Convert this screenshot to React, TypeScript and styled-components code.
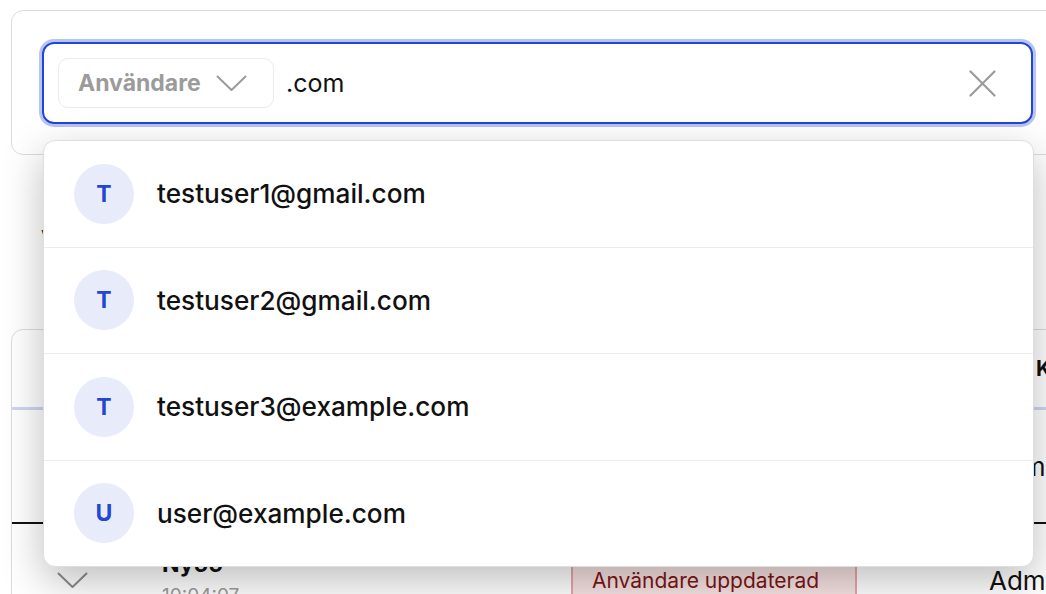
import React from 'react';
import styled, { createGlobalStyle } from 'styled-components';

const blue = '#1f45d9';
const ringBlue = '#b8c4f2';
const border = '#dcdcdc';
const softLine = '#ececec';
const mutedGray = '#9b9b9b';

const GlobalStyle = createGlobalStyle`
  html, body {
    margin: 0;
    padding: 0;
    background: #fff;
    overflow: hidden;
  }
  body {
    font-family: Inter, "Noto Sans", sans-serif;
    color: #111;
    -webkit-font-smoothing: antialiased;
  }
`;

const Page = styled.div`
  width: 1064px;
  padding: 10px 0 0 11px;
  box-sizing: border-box;
`;

const SearchCard = styled.div`
  border: 1px solid ${border};
  border-radius: 12px;
  padding: 31px 30px 30px 30px;
`;

const SearchWrap = styled.div`
  position: relative;
`;

const SearchBox = styled.div`
  height: 82px;
  box-sizing: border-box;
  border: 2px solid ${blue};
  border-radius: 12px;
  box-shadow: 0 0 0 3px ${ringBlue};
  display: flex;
  align-items: center;
  padding: 0 35px 0 14px;
  gap: 12px;
`;

const ScopeSelect = styled.div`
  width: 216px;
  height: 50px;
  box-sizing: border-box;
  border: 1px solid #ebebeb;
  border-radius: 10px;
  display: flex;
  align-items: center;
  justify-content: space-between;
  padding: 0 26px 0 19px;
  color: ${mutedGray};
  font-size: 23px;
  font-weight: 700;
`;

const QueryText = styled.div`
  flex: 1;
  font-size: 25px;
  color: #111;
`;

const ClearButton = styled.div`
  display: flex;
  align-items: center;
  color: ${mutedGray};
`;

const Dropdown = styled.div`
  position: absolute;
  top: calc(100% + 16px);
  left: 1px;
  width: 989px;
  background: #fff;
  border: 1px solid #dedede;
  border-radius: 12px;
  box-shadow: 0 14px 42px rgba(0, 0, 0, 0.26);
  z-index: 10;
  overflow: hidden;
`;

const Option = styled.div`
  height: 105.5px;
  display: flex;
  align-items: center;
  gap: 23px;
  padding-left: 30px;
  &:not(:last-child) {
    border-bottom: 1px solid ${softLine};
  }
`;

const Avatar = styled.div`
  width: 60px;
  height: 60px;
  border-radius: 50%;
  background: #e8ecfa;
  color: #2446d4;
  display: flex;
  align-items: center;
  justify-content: center;
  font-size: 23px;
  font-weight: 700;
`;

const Email = styled.div`
  font-size: 26.2px;
  font-weight: 500;
  color: #111;
`;

const Summary = styled.div`
  margin: 68px 0 0 30px;
  font-size: 16px;
  color: #333;
`;

const TableCard = styled.div`
  margin-top: 86px;
  border: 1px solid ${border};
  border-radius: 12px;
  height: 320px;
`;

const columns = '150px 409px 418px 1fr';

const HeaderRow = styled.div`
  display: grid;
  grid-template-columns: ${columns};
  align-items: center;
  height: 77px;
  border-bottom: 3px solid #cdd5f5;
  font-size: 21px;
  font-weight: 700;
`;

const HeaderCell = styled.div<{ $inset?: number }>`
  padding-left: ${p => p.$inset || 0}px;
  white-space: nowrap;
`;

const Row = styled.div<{ $marked?: boolean }>`
  display: grid;
  grid-template-columns: ${columns};
  align-items: center;
  height: 114px;
  box-sizing: border-box;
  border-bottom: ${p => (p.$marked ? '2px solid #111' : `1px solid ${softLine}`)};
`;

const ExpandCell = styled.div`
  padding-left: 45px;
  display: flex;
  align-items: center;
  color: #8d8d8d;
`;

const NameCell = styled.div`
  display: flex;
  flex-direction: column;
  gap: 6px;
  padding-bottom: 4px;
`;

const Name = styled.div`
  font-size: 23px;
  font-weight: 700;
`;

const Time = styled.div`
  font-size: 19px;
  color: ${mutedGray};
`;

const Badge = styled.div`
  justify-self: start;
  width: 286px;
  box-sizing: border-box;
  padding: 6px 0 6px 19px;
  background: #f7e2e2;
  border: 2px solid #e8a6a6;
  color: #7c1616;
  font-size: 21px;
  white-space: nowrap;
`;

const UserCell = styled.div`
  font-size: 26px;
  white-space: nowrap;
`;

const Chevron = ({ color = 'currentColor' }: { color?: string }) => (
  <svg width="31" height="17" viewBox="0 0 31 17" fill="none">
    <path d="M1.5 1.5 L15.5 15 L29.5 1.5" stroke={color} strokeWidth="2" strokeLinecap="round" strokeLinejoin="round" />
  </svg>
);

const CloseIcon = () => (
  <svg width="27" height="27" viewBox="0 0 27 27" fill="none">
    <path d="M1.5 1.5 L25.5 25.5 M25.5 1.5 L1.5 25.5" stroke="currentColor" strokeWidth="2.2" strokeLinecap="round" />
  </svg>
);

const suggestions = [
  'testuser1@gmail.com',
  'testuser2@gmail.com',
  'testuser3@example.com',
  'user@example.com'
];

const events = [
  { name: 'Ny54', time: '10:02:51', event: 'Användare skapad', user: 'Admin', marked: true },
  { name: 'Ny55', time: '10:04:07', event: 'Användare uppdaterad', user: 'Admin', marked: false }
];

const App = () => (
  <Page>
    <GlobalStyle />
    <SearchCard>
      <SearchWrap>
        <SearchBox>
          <ScopeSelect>
            Användare
            <Chevron />
          </ScopeSelect>
          <QueryText>.com</QueryText>
          <ClearButton>
            <CloseIcon />
          </ClearButton>
        </SearchBox>
        <Dropdown>
          {suggestions.map(email => (
            <Option key={email}>
              <Avatar>{email.charAt(0).toUpperCase()}</Avatar>
              <Email>{email}</Email>
            </Option>
          ))}
        </Dropdown>
      </SearchWrap>
    </SearchCard>
    <Summary>visar 2 av 2 händelser</Summary>
    <TableCard>
      <HeaderRow>
        <HeaderCell />
        <HeaderCell>Namn</HeaderCell>
        <HeaderCell>Händelse</HeaderCell>
        <HeaderCell $inset={47}>Källa</HeaderCell>
      </HeaderRow>
      {events.map(e => (
        <Row key={e.name} $marked={e.marked}>
          <ExpandCell>
            <Chevron />
          </ExpandCell>
          <NameCell>
            <Name>{e.name}</Name>
            <Time>{e.time}</Time>
          </NameCell>
          <Badge>{e.event}</Badge>
          <UserCell>{e.user}</UserCell>
        </Row>
      ))}
    </TableCard>
  </Page>
);

export default App;
